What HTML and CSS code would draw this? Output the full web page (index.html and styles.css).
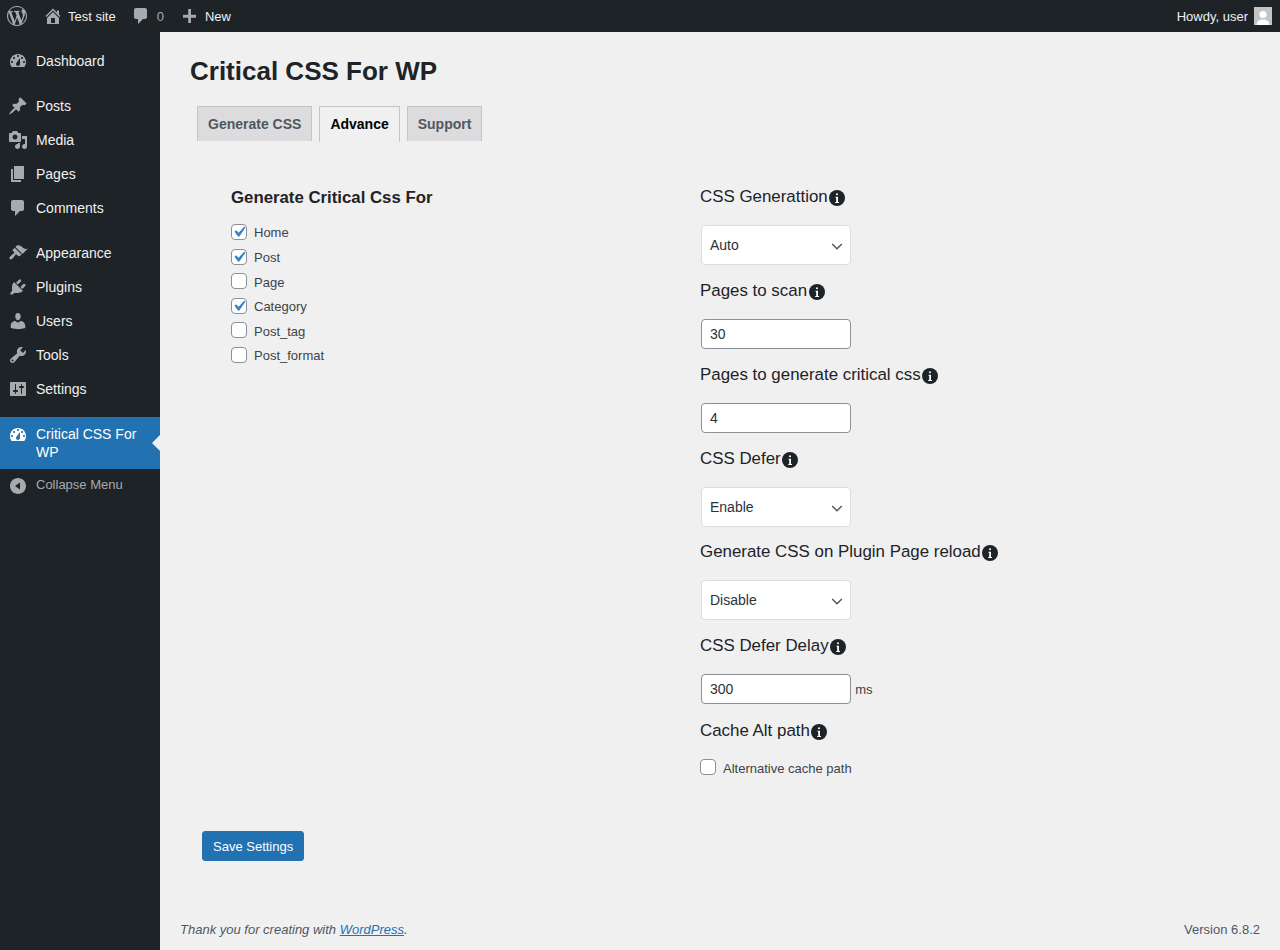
FILE: index.html
```html
<!DOCTYPE html>
<html lang="en">
<head>
    <meta charset="UTF-8">
    <meta name="viewport" content="width=device-width, initial-scale=1.0">
    <title>Critical CSS For WP</title>
    <link rel="stylesheet" href="styles.css">
</head>
<body>
    <header class="admin-bar">
        <div class="bar-left">
            <a href="#" class="bar-logo">
                <svg class="bar-icon" viewBox="0 0 20 20"><path d="M20 10c0-5.51-4.49-10-10-10C4.48 0 0 4.49 0 10c0 5.52 4.48 10 10 10 5.51 0 10-4.48 10-10zM7.78 15.37L4.37 6.22c.55-.02 1.17-.08 1.17-.08.5-.06.44-1.13-.06-1.11 0 0-1.45.11-2.37.11-.18 0-.37 0-.58-.01C4.12 2.69 6.87 1.11 10 1.11c2.33 0 4.45.87 6.05 2.34-.68-.11-1.65.39-1.65 1.58 0 .74.45 1.36.9 2.1.35.61.55 1.36.55 2.46 0 1.49-1.4 5-1.4 5l-3.03-8.37c.54-.02.82-.17.82-.17.5-.05.44-1.25-.06-1.22 0 0-1.44.12-2.38.12-.87 0-2.33-.12-2.33-.12-.5-.03-.56 1.2-.06 1.22l.92.08 1.26 3.41zM17.41 10c.24-.64.74-1.87.43-4.25.7 1.29 1.05 2.71 1.05 4.25 0 3.29-1.73 6.24-4.4 7.78.97-2.59 1.94-5.2 2.92-7.78zM6.1 18.09C3.12 16.65 1.11 13.53 1.11 10c0-1.3.23-2.48.72-3.59C3.25 10.3 4.67 14.2 6.1 18.09zm4.03-6.63l2.58 6.98c-.86.29-1.76.45-2.71.45-.79 0-1.57-.11-2.29-.33.81-2.38 1.62-4.74 2.42-7.1z"/></svg>
            </a>
            <a href="#" class="bar-item">
                <svg class="bar-icon" viewBox="0 0 20 20"><path d="M16 8.5l1.53 1.53-1.06 1.06L10 4.62l-6.47 6.47-1.06-1.06L10 2.5l4 4v-2h2v4zm-6-2.46l6 5.99V18H4v-5.97zM12 17v-5H8v5h4z"/></svg>
                Test site
            </a>
            <a href="#" class="bar-item">
                <svg class="bar-icon" viewBox="0 0 20 20"><path d="M5 2h9c1.1 0 2 .9 2 2v7c0 1.1-.9 2-2 2h-2l-5 5v-5H5c-1.1 0-2-.9-2-2V4c0-1.1.9-2 2-2z"/></svg>
                <span class="bar-count">0</span>
            </a>
            <a href="#" class="bar-item">
                <svg class="bar-icon" viewBox="0 0 20 20"><path d="M16 8.800v2.900h-5V17H8.200v-5.300H3V8.800h5.200V3H11v5.800z"/></svg>
                New
            </a>
        </div>
        <a href="#" class="bar-user">
            Howdy, user
            <svg class="avatar" viewBox="0 0 18 18"><rect width="18" height="18" fill="#c4c4c4"/><circle cx="9" cy="7.5" r="3.6" fill="#fff"/><path d="M2.5 18c.4-4 3-5.6 6.5-5.6s6.1 1.600 6.500 5.600z" fill="#fff"/></svg>
        </a>
    </header>

    <div class="layout">
        <nav class="sidebar">
            <a href="#" class="menu-item">
                <svg class="menu-icon" viewBox="0 0 20 20"><path d="M3.76 16h12.48c1.1-1.37 1.76-3.11 1.76-5 0-4.42-3.58-8-8-8s-8 3.58-8 8c0 1.890.66 3.630 1.760 5zM10 4c.55 0 1 .45 1 1s-.45 1-1 1-1-.45-1-1 .45-1 1-1zM6 6c.55 0 1 .45 1 1s-.45 1-1 1-1-.45-1-1 .45-1 1-1zm8 0c.55 0 1 .45 1 1s-.45 1-1 1-1-.45-1-1 .45-1 1-1zm-5.370 5.550L12 7v6c0 1.100-.9 2-2 2s-2-.9-2-2c0-.570.240-1.080.630-1.450zM4 10c.55 0 1 .45 1 1s-.45 1-1 1-1-.45-1-1 .45-1 1-1zm12 0c.55 0 1 .45 1 1s-.45 1-1 1-1-.45-1-1 .45-1 1-1z" fill-rule="evenodd"/></svg>
                Dashboard
            </a>

            <a href="#" class="menu-item menu-group">
                <svg class="menu-icon" viewBox="0 0 20 20"><path d="M10.44 3.02l1.82-1.82 6.36 6.35-1.83 1.82c-1.05-.68-2.48-.57-3.41.36l-.75.75c-.92.93-1.04 2.35-.35 3.41l-1.83 1.82-2.41-2.41-2.8 2.79c-.42.42-3.38 2.71-3.8 2.29s1.86-3.39 2.28-3.81l2.79-2.79L4.1 9.36l1.83-1.82c1.05.69 2.48.57 3.4-.36l.75-.75c.93-.92 1.05-2.35.36-3.41z"/></svg>
                Posts
            </a>
            <a href="#" class="menu-item">
                <svg class="menu-icon" viewBox="0 0 20 20"><path d="M13 11V4c0-.55-.45-1-1-1h-1.670L9 1H5L3.670 3H2c-.55 0-1 .45-1 1v7c0 .55.45 1 1 1h10c.55 0 1-.45 1-1zM7 4.500c1.380 0 2.500 1.120 2.500 2.500S8.380 9.500 7 9.500 4.500 8.380 4.500 7 5.620 4.500 7 4.500zM14 6h5v10.500c0 1.380-1.120 2.500-2.500 2.500S14 17.880 14 16.500s1.120-2.500 2.500-2.500c.170 0 .340.020.500.050V9h-3V6zm-4 8.050V13h2v3.500c0 1.380-1.120 2.500-2.500 2.500S7 17.880 7 16.500 8.120 14 9.500 14c.170 0 .340.020.500.050z"/></svg>
                Media
            </a>
            <a href="#" class="menu-item">
                <svg class="menu-icon" viewBox="0 0 20 20"><path d="M6 15V2h10v13H6zm-1 1h8v2H3V5h2v11z"/></svg>
                Pages
            </a>
            <a href="#" class="menu-item">
                <svg class="menu-icon" viewBox="0 0 20 20"><path d="M5 2h9c1.100 0 2 .9 2 2v7c0 1.100-.9 2-2 2h-2l-5 5v-5H5c-1.100 0-2-.9-2-2V4c0-1.100.9-2 2-2z"/></svg>
                Comments
            </a>

            <a href="#" class="menu-item menu-group">
                <svg class="menu-icon" viewBox="0 0 20 20"><path d="M14.480 11.060L7.410 3.990l1.500-1.500c.5-.56 2.300-.47 3.510.32 1.210.8 1.430 1.280 2.910 2.100 1.180.64 2.450 1.260 4.450.85zm-.71.71L6.700 4.700 4.930 6.470c-.39.39-.39 1.020 0 1.410l1.060 1.060c.39.39.39 1.030 0 1.420-.6.6-1.430 1.110-2.210 1.690-.35.26-.7.53-1.010.84C1.430 13.710.96 15.120 1.840 16.010c.89.88 2.300.41 3.170-.94.31-.31.58-.66.84-1.010.58-.78 1.090-1.610 1.690-2.210.39-.39 1.030-.39 1.420 0l1.060 1.060c.39.39 1.020.39 1.410 0z"/></svg>
                Appearance
            </a>
            <a href="#" class="menu-item">
                <svg class="menu-icon" viewBox="0 0 20 20"><path d="M13.110 4.360L9.870 7.600 8 5.730l3.240-3.240c.35-.34 1.050-.2 1.560.32.52.51.66 1.210.31 1.550zm-8 1.770l.91-1.120 9.010 9.010-1.190.84c-.71.71-2.630 1.160-3.820 1.160H6.140L4.900 17.260c-.59.59-1.540.59-2.120 0-.59-.58-.59-1.530 0-2.120l1.240-1.240v-3.880c0-1.130.4-3.190 1.090-3.890zm7.260 3.970l3.240-3.240c.34-.35 1.040-.21 1.550.31.52.51.66 1.210.31 1.550l-3.240 3.250z"/></svg>
                Plugins
            </a>
            <a href="#" class="menu-item">
                <svg class="menu-icon" viewBox="0 0 20 20"><path d="M10 9.250c-2.270 0-2.730-3.440-2.730-3.440C7 4.020 7.820 2 9.970 2c2.160 0 2.980 2.020 2.710 3.810 0 0-.41 3.440-2.680 3.440zm0 2.570L12.720 10c2.390 0 4.520 2.330 4.520 4.530v2.490s-3.650 1.130-7.240 1.130c-3.650 0-7.240-1.130-7.240-1.130v-2.490c0-2.250 1.940-4.480 4.470-4.480z"/></svg>
                Users
            </a>
            <a href="#" class="menu-item">
                <svg class="menu-icon" viewBox="0 0 20 20"><path d="M16.680 9.770c-1.340 1.340-3.300 1.670-4.950.99l-5.410 6.520c-.99.99-2.590.99-3.580 0s-.99-2.590 0-3.570l6.520-5.420c-.68-1.650-.35-3.610.99-4.950 1.280-1.280 3.120-1.620 4.720-1.060l-2.890 2.890 2.820 2.820 2.860-2.870c.53 1.580.18 3.390-1.080 4.650zM3.810 16.210c.4.39 1.040.39 1.430 0 .4-.4.4-1.040 0-1.430-.39-.4-1.030-.4-1.430 0-.39.39-.39 1.030 0 1.430z"/></svg>
                Tools
            </a>
            <a href="#" class="menu-item">
                <svg class="menu-icon" viewBox="0 0 20 20"><path d="M18 16V4c0-.55-.45-1-1-1H3c-.55 0-1 .45-1 1v12c0 .55.45 1 1 1h14c.55 0 1-.45 1-1zM8 11h1c.55 0 1 .45 1 1s-.45 1-1 1H8v1.500c0 .28-.22.5-.5.5s-.5-.22-.5-.5V13H6c-.55 0-1-.45-1-1s.45-1 1-1h1V5.500c0-.28.22-.5.5-.5s.5.22.5.5V11zm5-2h-1c-.55 0-1-.45-1-1s.45-1 1-1h1V5.500c0-.28.22-.5.5-.5s.5.22.5.5V7h1c.55 0 1 .45 1 1s-.45 1-1 1h-1v5.500c0 .28-.22.5-.5.5s-.5-.22-.5-.5V9z"/></svg>
                Settings
            </a>

            <a href="#" class="menu-item menu-group menu-active">
                <svg class="menu-icon" viewBox="0 0 20 20"><path d="M3.760 16h12.480c1.100-1.370 1.760-3.110 1.760-5 0-4.420-3.580-8-8-8s-8 3.580-8 8c0 1.89.66 3.630 1.760 5zM10 4c.55 0 1 .45 1 1s-.45 1-1 1-1-.45-1-1 .45-1 1-1zM6 6c.55 0 1 .45 1 1s-.45 1-1 1-1-.45-1-1 .45-1 1-1zm8 0c.55 0 1 .45 1 1s-.45 1-1 1-1-.45-1-1 .45-1 1-1zm-5.370 5.550L12 7v6c0 1.100-.9 2-2 2s-2-.9-2-2c0-.57.24-1.080.63-1.450zM4 10c.55 0 1 .45 1 1s-.45 1-1 1-1-.45-1-1 .45-1 1-1zm12 0c.55 0 1 .45 1 1s-.45 1-1 1-1-.45-1-1 .45-1 1-1z" fill-rule="evenodd"/></svg>
                <span>Critical CSS For WP</span>
            </a>
            <a href="#" class="menu-item menu-collapse">
                <svg class="menu-icon" viewBox="0 0 20 20"><path d="M10 2c4.420 0 8 3.580 8 8s-3.580 8-8 8-8-3.580-8-8 3.580-8 8-8zm2 11.500v-7L7 10z" fill-rule="evenodd"/></svg>
                Collapse Menu
            </a>
        </nav>

        <div class="content">
            <main class="wrap">
                <h1 class="page-title">Critical CSS For WP</h1>

                <div class="tabs">
                    <a href="#" class="tab">Generate CSS</a>
                    <a href="#" class="tab tab-active">Advance</a>
                    <a href="#" class="tab">Support</a>
                </div>

                <form class="settings">
                    <section class="col-left">
                        <h2 class="col-title">Generate Critical Css For</h2>
                        <div class="check-list">
                            <label class="check"><input type="checkbox" checked> Home</label>
                            <label class="check"><input type="checkbox" checked> Post</label>
                            <label class="check"><input type="checkbox"> Page</label>
                            <label class="check"><input type="checkbox" checked> Category</label>
                            <label class="check"><input type="checkbox"> Post_tag</label>
                            <label class="check"><input type="checkbox"> Post_format</label>
                        </div>
                    </section>

                    <section class="col-right">
                        <div class="field">
                            <div class="field-label">CSS Generattion<svg class="info" viewBox="0 0 16 16"><circle cx="8" cy="8" r="8"/><rect class="info-mark" x="7" y="3.200" width="2" height="2" rx="1"/><path class="info-mark" d="M6.500 6.700h2.500v5.300h1v1.100H6.200V12h1V7.800h-.7z"/></svg></div>
                            <select class="control">
                                <option>Auto</option>
                                <option>Manual</option>
                            </select>
                        </div>
                        <div class="field">
                            <div class="field-label">Pages to scan<svg class="info" viewBox="0 0 16 16"><circle cx="8" cy="8" r="8"/><rect class="info-mark" x="7" y="3.200" width="2" height="2" rx="1"/><path class="info-mark" d="M6.500 6.700h2.500v5.300h1v1.100H6.200V12h1V7.800h-.7z"/></svg></div>
                            <input class="control" type="number" value="30">
                        </div>
                        <div class="field">
                            <div class="field-label">Pages to generate critical css<svg class="info" viewBox="0 0 16 16"><circle cx="8" cy="8" r="8"/><rect class="info-mark" x="7" y="3.200" width="2" height="2" rx="1"/><path class="info-mark" d="M6.500 6.700h2.500v5.300h1v1.100H6.200V12h1V7.800h-.7z"/></svg></div>
                            <input class="control" type="number" value="4">
                        </div>
                        <div class="field">
                            <div class="field-label">CSS Defer<svg class="info" viewBox="0 0 16 16"><circle cx="8" cy="8" r="8"/><rect class="info-mark" x="7" y="3.200" width="2" height="2" rx="1"/><path class="info-mark" d="M6.500 6.700h2.500v5.300h1v1.100H6.200V12h1V7.800h-.7z"/></svg></div>
                            <select class="control">
                                <option>Enable</option>
                                <option>Disable</option>
                            </select>
                        </div>
                        <div class="field">
                            <div class="field-label">Generate CSS on Plugin Page reload<svg class="info" viewBox="0 0 16 16"><circle cx="8" cy="8" r="8"/><rect class="info-mark" x="7" y="3.200" width="2" height="2" rx="1"/><path class="info-mark" d="M6.500 6.700h2.500v5.300h1v1.100H6.200V12h1V7.800h-.7z"/></svg></div>
                            <select class="control">
                                <option>Disable</option>
                                <option>Enable</option>
                            </select>
                        </div>
                        <div class="field">
                            <div class="field-label">CSS Defer Delay<svg class="info" viewBox="0 0 16 16"><circle cx="8" cy="8" r="8"/><rect class="info-mark" x="7" y="3.200" width="2" height="2" rx="1"/><path class="info-mark" d="M6.500 6.700h2.500v5.300h1v1.100H6.200V12h1V7.800h-.7z"/></svg></div>
                            <input class="control" type="number" value="300"> <span class="unit">ms</span>
                        </div>
                        <div class="field">
                            <div class="field-label">Cache Alt path<svg class="info" viewBox="0 0 16 16"><circle cx="8" cy="8" r="8"/><rect class="info-mark" x="7" y="3.200" width="2" height="2" rx="1"/><path class="info-mark" d="M6.500 6.700h2.500v5.300h1v1.100H6.200V12h1V7.800h-.7z"/></svg></div>
                            <label class="check check-alt"><input type="checkbox"> Alternative cache path</label>
                        </div>
                    </section>
                </form>

                <button class="save-btn" type="button">Save Settings</button>
            </main>

            <footer class="footer">
                <span class="footer-thanks">Thank you for creating with <a href="#">WordPress</a>.</span>
                <span>Version 6.8.2</span>
            </footer>
        </div>
    </div>
</body>
</html>
```

FILE: styles.css
```css
:root {
    --bar-color: #1d2327;
    --primary-color: #2271b1;
    --text-color: #1d2327;
    --muted-color: #3c434a;
    --background-color: #f0f0f1;
    --icon-color: #a7aaad;
}
* {
    box-sizing: border-box;
}
body {
    font-family: "Liberation Sans", Arial, sans-serif;
    font-size: 13px;
    color: var(--muted-color);
    background-color: var(--background-color);
    margin: 0;
    min-height: 100vh;
    display: flex;
    flex-direction: column;
}
a {
    text-decoration: none;
    color: inherit;
}

/* top bar */
.admin-bar {
    height: 32px;
    background-color: var(--bar-color);
    color: #f0f0f1;
    display: flex;
    justify-content: space-between;
    align-items: center;
    padding: 0 8px 0 7px;
}
.bar-left {
    display: flex;
    align-items: center;
}
.bar-logo {
    display: flex;
    margin-right: 16px;
}
.bar-item {
    display: flex;
    align-items: center;
    gap: 5px;
    margin-right: 15px;
}
.bar-icon {
    width: 20px;
    height: 20px;
    fill: var(--icon-color);
}
.bar-count {
    color: var(--icon-color);
    margin: 0 1px;
}
.bar-user {
    display: flex;
    align-items: center;
    gap: 6px;
}
.avatar {
    width: 18px;
    height: 18px;
}

/* side menu */
.layout {
    flex: 1;
    display: flex;
}
.sidebar {
    width: 160px;
    flex-shrink: 0;
    background-color: var(--bar-color);
    padding-top: 12px;
}
.menu-item {
    display: flex;
    align-items: center;
    min-height: 34px;
    padding: 0 8px;
    font-size: 14px;
    line-height: 18px;
    color: #f0f0f1;
    position: relative;
}
.menu-icon {
    width: 20px;
    height: 20px;
    margin-right: 8px;
    flex-shrink: 0;
    fill: var(--icon-color);
}
.menu-group {
    margin-top: 11px;
}
.menu-active {
    background-color: var(--primary-color);
    color: #fff;
    align-items: flex-start;
    padding-top: 8px;
    padding-bottom: 8px;
}
.menu-active .menu-icon {
    fill: #fff;
}
.menu-active::after {
    content: "";
    position: absolute;
    right: 0;
    top: 50%;
    margin-top: -8px;
    border: 8px solid transparent;
    border-right-color: var(--background-color);
    border-left-width: 0;
}
.menu-collapse {
    align-items: flex-start;
    padding-top: 7px;
    font-size: 13px;
    line-height: 17px;
    color: var(--icon-color);
}

/* content */
.content {
    flex: 1;
    display: flex;
    flex-direction: column;
    justify-content: space-between;
    min-width: 0;
}
.wrap {
    padding: 0 30px;
}
.page-title {
    font-size: 26px;
    line-height: 34px;
    font-weight: bold;
    color: var(--text-color);
    margin: 22px 0 0;
}
.tabs {
    display: flex;
    gap: 7px;
    align-items: flex-start;
    margin: 18px 0 0 7px;
}
.tab {
    height: 35px;
    padding: 0 10px;
    font-size: 14px;
    font-weight: bold;
    line-height: 35px;
    color: #50575e;
    background-color: #dcdcde;
    border: 1px solid #c3c4c7;
    border-bottom: none;
}
.tab-active {
    height: 36px;
    color: #000;
    background-color: var(--background-color);
}

.settings {
    display: grid;
    grid-template-columns: 469px 1fr;
    padding: 42.4px 0 0 41px;
}
.col-title {
    font-size: 16.8px;
    line-height: 26px;
    font-weight: bold;
    color: var(--text-color);
    margin: 1px 0 9.25px;
}
.check {
    display: flex;
    align-items: center;
    height: 24.6px;
    gap: 7px;
    font-size: 13px;
}
.check input {
    appearance: none;
    width: 16px;
    height: 16px;
    margin: 0;
    background: #fff center / 21px 21px no-repeat;
    border: 1px solid #8c8f94;
    border-radius: 4px;
    flex-shrink: 0;
    position: relative;
    top: -1px;
}
.check input:checked {
    background-image: url("data:image/svg+xml,%3Csvg xmlns='http://www.w3.org/2000/svg' viewBox='0 0 20 20'%3E%3Cpath d='M14.83 4.89l1.34.94-5.81 8.38H9.02L5.78 9.67l1.34-1.25 2.57 2.4z' fill='%233582c4'/%3E%3C/svg%3E");
}
.field {
    margin-bottom: 12.75px;
}
.field-label {
    display: flex;
    align-items: center;
    height: 26px;
    font-size: 16.9px;
    color: var(--text-color);
    margin-bottom: 15px;
}
.info {
    width: 16px;
    height: 16px;
    margin: 2px 0 0 1.5px;
    fill: var(--bar-color);
}
.info .info-mark {
    fill: #fff;
}
.control {
    display: inline-block;
    vertical-align: top;
    width: 150px;
    margin: 0 1px;
    padding: 0 8px;
    font-family: inherit;
    font-size: 14px;
    color: #2c3338;
    background-color: #fff;
    border: 1px solid #8c8f94;
    border-radius: 4px;
}
input.control {
    height: 30px;
}
select.control {
    height: 40px;
    appearance: none;
    border-color: #dcdcde;
    padding-right: 24px;
    background: #fff url("data:image/svg+xml,%3Csvg width='20' height='20' xmlns='http://www.w3.org/2000/svg'%3E%3Cpath d='M4 7.500l6 6 6-6' fill='none' stroke='%23555' stroke-width='1.800'/%3E%3C/svg%3E") no-repeat right 5px top 55% / 16px 16px;
}
.unit {
    display: inline-block;
    vertical-align: top;
    height: 31px;
    line-height: 32px;
    margin-left: -0.5px;
}
.check-alt {
    margin-top: -3px;
}
.save-btn {
    display: block;
    height: 30px;
    margin: 38px 0 0 12px;
    padding: 0 10px;
    font-family: inherit;
    font-size: 13px;
    color: #fff;
    background-color: var(--primary-color);
    border: 1px solid var(--primary-color);
    border-radius: 3px;
}
.footer {
    display: flex;
    justify-content: space-between;
    padding: 0 20px 12px;
    line-height: 16px;
    color: #50575e;
}
.footer-thanks {
    font-style: italic;
}
.footer a {
    color: var(--primary-color);
    text-decoration: underline;
}
```
